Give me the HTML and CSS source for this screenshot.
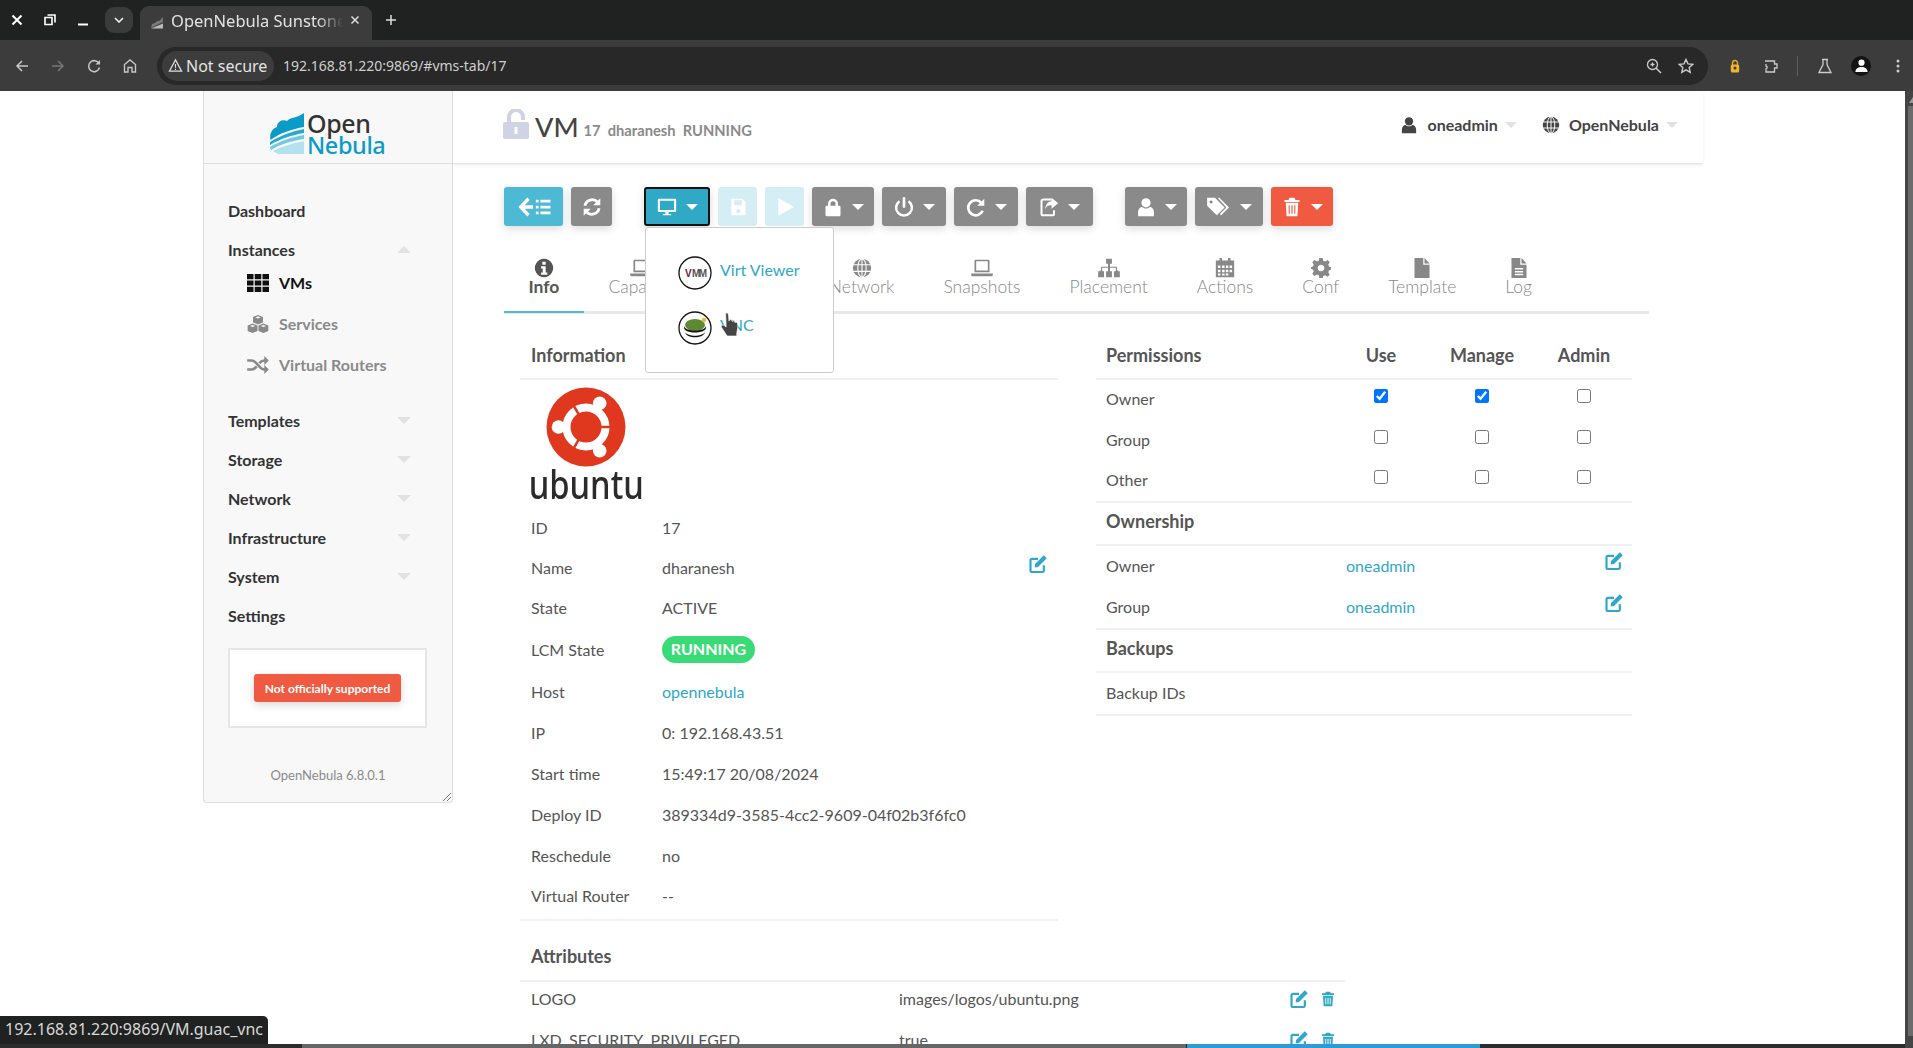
FILE: index.html
```html
<!DOCTYPE html>
<html lang="en">
<head>
<meta charset="utf-8">
<title>OpenNebula Sunstone</title>
<link rel="stylesheet" href="styles.css">
</head>
<body>
<svg class="sprite" xmlns="http://www.w3.org/2000/svg">
  <symbol id="i-edit" viewBox="0 0 24 24"><path d="M19 13.5V20a1.6 1.6 0 0 1-1.6 1.6H4.6A1.6 1.6 0 0 1 3 20V7.5a1.6 1.6 0 0 1 1.6-1.6H12" fill="none" stroke="currentColor" stroke-width="2.6"/><path d="M8.5 12 19 1.5 22.5 5 12 15.5l-4 .8z" fill="currentColor"/></symbol>
  <symbol id="i-trash" viewBox="0 0 24 24"><path fill="currentColor" fill-rule="evenodd" d="M9 1h6l1.2 2.5H21V6H3V3.500h4.800zM4.500 7h15l-1 16h-13zM8 10v10h1.300V10zM11.300 10v10h1.400V10zM14.700 10v10H16V10z"/></symbol>
  <symbol id="i-user" viewBox="0 0 24 24"><circle cx="12" cy="7" r="5.500" fill="currentColor"/><path d="M2.500 23v-5c0-3.500 2.500-6 5-6 1 1 2.500 1.800 4.500 1.800s3.500-.8 4.500-1.800c2.500 0 5 2.500 5 6v5z" fill="currentColor"/></symbol>
  <symbol id="i-globe" viewBox="0 0 24 24"><circle cx="12" cy="12" r="11" fill="currentColor"/><g fill="none" stroke="#fff" stroke-width="1.300"><ellipse cx="12" cy="12" rx="5" ry="11"/><path d="M12 1v22M1.500 8h21M1.500 16h21"/></g></symbol>
  <symbol id="i-desktop" viewBox="0 0 24 24"><path fill="currentColor" fill-rule="evenodd" d="M2.500 2h19A1.500 1.500 0 0 1 23 3.500v13a1.500 1.500 0 0 1-1.500 1.500h-19A1.500 1.500 0 0 1 1 16.500v-13A1.500 1.500 0 0 1 2.500 2zM3.500 4.500v11h17v-11zM10 18h4v2.500h3V22H7v-1.500h3z"/></symbol>
  <symbol id="i-save" viewBox="0 0 24 24"><path fill="currentColor" fill-rule="evenodd" d="M4 2h13l4 4v16H4zM7.500 4v6h9V4zM12.500 14.500a2.500 2.500 0 1 0 .01 0z"/></symbol>
  <symbol id="i-play" viewBox="0 0 24 24"><path fill="currentColor" d="M4 1.500 23 12 4 22.500z"/></symbol>
  <symbol id="i-lock" viewBox="0 0 24 24"><path fill="currentColor" fill-rule="evenodd" d="M6 10.500V8a6 6 0 0 1 12 0v2.500h1.500A1.500 1.500 0 0 1 21 12v9.500a1.500 1.500 0 0 1-1.500 1.500h-15A1.500 1.500 0 0 1 3 21.500V12a1.500 1.500 0 0 1 1.500-1.500zM9 10.500h6V8a3 3 0 0 0-6 0z"/></symbol>
  <symbol id="i-unlock" viewBox="0 0 26 30"><path d="M6 14V8a7 7 0 0 1 14 0v3" fill="none" stroke="currentColor" stroke-width="4"/><path fill="currentColor" fill-rule="evenodd" d="M2 13h22a2 2 0 0 1 2 2v13a2 2 0 0 1-2 2H2a2 2 0 0 1-2-2V15a2 2 0 0 1 2-2zM11.500 18v7h3v-7z"/></symbol>
  <symbol id="i-power" viewBox="0 0 24 24"><path d="M12 1.500v10" fill="none" stroke="currentColor" stroke-width="3.200" stroke-linecap="round"/><path d="M6.500 5A9.500 9.500 0 1 0 17.500 5" fill="none" stroke="currentColor" stroke-width="3"/></symbol>
  <symbol id="i-repeat" viewBox="0 0 24 24"><path d="M18.500 7A9 9 0 1 0 20 16.500" fill="none" stroke="currentColor" stroke-width="3.200"/><path d="M22 2v8.500h-8.500z" fill="currentColor"/></symbol>
  <symbol id="i-share" viewBox="0 0 24 24"><path d="M15 3H5a2 2 0 0 0-2 2v15a2 2 0 0 0 2 2h11a2 2 0 0 0 2-2v-4" fill="none" stroke="currentColor" stroke-width="2.400"/><path d="M15 1l8 6.500-8 6.500v-4c-4 0-6 1-7.500 5 0-6 3-9.500 7.500-10z" fill="currentColor"/></symbol>
  <symbol id="i-tags" viewBox="0 0 28 24"><path fill="currentColor" fill-rule="evenodd" d="M1 2h9l11 11-9 9L1 11zM5.500 5a1.800 1.800 0 1 0 .01 0z"/><path d="M13 2h2l11 11-9 9-1.500-1.500L23 13z" fill="currentColor"/></symbol>
  <symbol id="i-refresh" viewBox="0 0 24 24"><path d="M3.500 10.500A8.800 8.800 0 0 1 18.500 6" fill="none" stroke="currentColor" stroke-width="3.400"/><path d="M22 1.500V10h-8.500z" fill="currentColor"/><path d="M20.500 13.500A8.800 8.800 0 0 1 5.500 18" fill="none" stroke="currentColor" stroke-width="3.400"/><path d="M2 22.500V14h8.500z" fill="currentColor"/></symbol>
  <symbol id="i-back" viewBox="0 0 36 24"><path d="M12 3 3.500 12l8.500 9M4 12h13" fill="none" stroke="currentColor" stroke-width="3.600"/><path fill="currentColor" d="M20 4h3v3h-3zM25 4h11v3H25zM20 10.500h3v3h-3zM25 10.500h11v3H25zM20 17h3v3h-3zM25 17h11v3H25z"/></symbol>
  <symbol id="i-info" viewBox="0 0 24 24"><path fill="currentColor" fill-rule="evenodd" d="M12 1a11 11 0 1 0 .01 0zM10 4.500h4v3.500h-4zM8.500 10h5.500v7.500h2V20H8.500v-2.500h2V12.500h-2z"/></symbol>
  <symbol id="i-laptop" viewBox="0 0 26 24"><path fill="currentColor" fill-rule="evenodd" d="M5.500 2h15A1.500 1.500 0 0 1 22 3.500V17H4V3.500A1.500 1.500 0 0 1 5.500 2zM6 4v11h14V4zM0 18.500h26V20a2 2 0 0 1-2 2H2a2 2 0 0 1-2-2z"/></symbol>
  <symbol id="i-sitemap" viewBox="0 0 26 24"><path fill="currentColor" d="M9.500 1h7v6h-2.300v3.500h8.300V15H24v1h-2.800v-4.300h-7V16h-2.400v-4.300h-7V16H2v-1h1.500v-4.500h8.300V7H9.500zM0 16h7v7H0zM9.500 16h7v7h-7zM19 16h7v7h-7z"/></symbol>
  <symbol id="i-calendar" viewBox="0 0 24 24"><path fill="currentColor" fill-rule="evenodd" d="M5.500 0h3v3h7V0h3v3H23v20H1V3h4.500zM3.500 9v3h3V9zM8.500 9v3h3V9zM13 9v3h3V9zM17.500 9v3h3V9zM3.500 14v3h3v-3zM8.500 14v3h3v-3zM13 14v3h3v-3zM17.500 14v3h3v-3zM3.500 18.500v2.500h3v-2.500zM8.500 18.500v2.500h3v-2.500zM13 18.500v2.500h3v-2.500z"/></symbol>
  <symbol id="i-gear" viewBox="0 0 24 24"><path fill="currentColor" fill-rule="evenodd" d="M10 0h4l.7 3.300 2.400 1 2.900-1.800L22.500 5l-1.800 2.900 1 2.400L24 11v3l-2.300.7-1 2.400 1.800 2.900-2.500 2.500-2.900-1.800-2.400 1L14 24h-4l-.7-3.300-2.400-1L4 21.500 1.500 19l1.800-2.900-1-2.400L0 13v-2l2.300-.7 1-2.400L1.500 5 4 2.500l2.900 1.800 2.400-1zM12 8a4 4 0 1 0 .01 0z"/></symbol>
  <symbol id="i-file" viewBox="0 0 20 24"><path fill="currentColor" d="M1 0h10.500v8H19v16H1zM13 0l6 6.500h-6z"/></symbol>
  <symbol id="i-filetext" viewBox="0 0 20 24"><path fill="currentColor" fill-rule="evenodd" d="M1 0h10.500v8H19v16H1zM5 12v1.800h10V12zM5 15.500v1.800h10v-1.800zM5 19v1.800h10V19z"/><path fill="currentColor" d="M13 0l6 6.500h-6z"/></symbol>
  <symbol id="i-th" viewBox="0 0 22 18"><path fill="currentColor" d="M0 0h6.500v5.200H0zM7.700 0h6.600v5.200H7.700zM15.500 0H22v5.200h-6.500zM0 6.400h6.500v5.200H0zM7.700 6.400h6.600v5.200H7.700zM15.500 6.400H22v5.200h-6.500zM0 12.800h6.500V18H0zM7.700 12.800h6.600V18H7.700zM15.500 12.800H22V18h-6.500z"/></symbol>
  <symbol id="i-cubes" viewBox="0 0 24 20"><path fill="currentColor" fill-rule="evenodd" d="M12 0l5.500 2.200v6l-5.500 2.300-5.500-2.300v-6zM9 2.700l3 1.200 3-1.200-3-1.200zM6 9.500l5.500 2.200v6L6 20 .5 17.700v-6zM3 12.200l3 1.200 3-1.200-3-1.200zM18 9.500l5.500 2.200v6L18 20l-5.500-2.300v-6zM15 12.200l3 1.200 3-1.200-3-1.200z"/></symbol>
  <symbol id="i-random" viewBox="0 0 24 20"><path d="M0 5h5c6 0 8 10 14 10h1M0 15h5c2.500 0 4-1.700 5.500-3.500M13.500 8C15 6.300 16.500 5 19 5h1" fill="none" stroke="currentColor" stroke-width="3"/><path fill="currentColor" d="M19 0l5 5-5 5zM19 10l5 5-5 5z"/></symbol>
</svg>

<header class="tabstrip">
  <div class="winctl">
    <svg class="win-ico" viewBox="0 0 12 12"><path d="M1.500 1.500l9 9M10.500 1.500l-9 9" stroke="#fff" stroke-width="2" fill="none"/></svg>
    <svg class="win-ico" viewBox="0 0 12 12"><path d="M3.500 1h7.500v7.500M1 3.500h7v7H1z" stroke="#fff" stroke-width="1.600" fill="none"/></svg>
    <svg class="win-ico" viewBox="0 0 12 12"><path d="M1 10.500h10" stroke="#fff" stroke-width="2" fill="none"/></svg>
  </div>
  <div class="tab-search"><svg class="tab-chev" viewBox="0 0 10 6"><path d="M1 1l4 4 4-4" stroke="#eee" stroke-width="1.600" fill="none"/></svg></div>
  <div class="browser-tab">
    <svg class="favicon" viewBox="0 0 14 14"><path d="M13 1v5L1 12l1-4c3 0 4-3 6-3s3-2 5-4z" fill="#777"/><path d="M1 12.500l12-5v5z" fill="#bbb"/></svg>
    <span class="browser-tab-title">OpenNebula Sunstone</span>
    <svg class="tab-close" viewBox="0 0 10 10"><path d="M1.500 1.500l7 7M8.500 1.500l-7 7" stroke="#ddd" stroke-width="1.500" fill="none"/></svg>
  </div>
  <svg class="tab-new" viewBox="0 0 12 12"><path d="M6 1v10M1 6h10" stroke="#ddd" stroke-width="1.500" fill="none"/></svg>
</header>

<div class="toolbar">
  <span class="tb-btn"><svg class="tb-ico" viewBox="0 0 16 16"><path d="M14 8H3M8 3 3 8l5 5" stroke="#c7c7c7" stroke-width="1.500" fill="none"/></svg></span>
  <span class="tb-btn"><svg class="tb-ico" viewBox="0 0 16 16"><path d="M2 8h11M8 3l5 5-5 5" stroke="#777" stroke-width="1.500" fill="none"/></svg></span>
  <span class="tb-btn"><svg class="tb-ico" viewBox="0 0 16 16"><path d="M13 5.500A5.500 5.500 0 1 0 13.500 9.500" stroke="#c7c7c7" stroke-width="1.500" fill="none"/><path d="M14 2v4.500H9.500z" fill="#c7c7c7"/></svg></span>
  <span class="tb-btn"><svg class="tb-ico" viewBox="0 0 16 16"><path d="M2.500 14V6.500L8 2l5.500 4.500V14H10V9.500H6V14z" stroke="#c7c7c7" stroke-width="1.400" fill="none"/></svg></span>
  <div class="omnibox">
    <div class="secure-pill">
      <svg class="warn-ico" viewBox="0 0 16 16"><path d="M8 2 1.500 14h13z" stroke="#ddd" stroke-width="1.300" fill="none"/><path d="M8 6.500v4M8 11.500v1.300" stroke="#ddd" stroke-width="1.200"/></svg>
      <span>Not secure</span>
    </div>
    <span class="url">192.168.81.220:9869/#vms-tab/17</span>
    <div class="omni-right">
      <svg class="tb-ico" viewBox="0 0 16 16"><circle cx="6.500" cy="6.500" r="5" stroke="#ccc" stroke-width="1.300" fill="none"/><path d="M10 10l5 5" stroke="#ccc" stroke-width="1.500"/><path d="M4.500 6.500h4M6.500 4.500v4" stroke="#ccc" stroke-width="1.300"/></svg>
      <svg class="tb-ico" viewBox="0 0 16 16"><path d="M8 1.500l2 4.400 4.700.5-3.500 3.200 1 4.700L8 11.900l-4.200 2.400 1-4.700L1.300 6.400 6 5.900z" stroke="#ccc" stroke-width="1.400" fill="none"/></svg>
    </div>
  </div>
  <span class="tb-btn"><svg class="tb-ico" viewBox="0 0 16 16"><path d="M5.500 7V5a2.500 2.500 0 0 1 5 0v2" stroke="#e5a823" stroke-width="1.500" fill="none"/><rect x="3.800" y="6.500" width="8.400" height="8" rx="1.500" fill="#f0b429"/><circle cx="8" cy="10" r="1.500" fill="#3a3a3a"/></svg></span>
  <span class="tb-btn"><svg class="tb-ico" viewBox="0 0 16 16"><path d="M2 3h9.500v3H14v4h-2.500v4H3v-3c1.500 0 1.500-3 0-3V6" stroke="#ccc" stroke-width="1.300" fill="none"/></svg></span>
  <span class="tb-sep"></span>
  <span class="tb-btn"><svg class="tb-ico" viewBox="0 0 16 16"><path d="M5 1.500h6M6 1.500v5L2 14.500h12L10 6.500v-5" stroke="#ccc" stroke-width="1.300" fill="none"/></svg></span>
  <span class="tb-btn"><span class="avatar"><svg class="avatar-ico" viewBox="0 0 16 16"><circle cx="8" cy="5" r="3.300" fill="#fff"/><path d="M1.500 15c0-4 3-5.500 6.500-5.500s6.500 1.500 6.500 5.500z" fill="#fff"/></svg></span></span>
  <span class="tb-btn tb-btn-last"><svg class="tb-ico" viewBox="0 0 16 16"><circle cx="8" cy="3" r="1.500" fill="#ccc"/><circle cx="8" cy="8" r="1.500" fill="#ccc"/><circle cx="8" cy="13" r="1.500" fill="#ccc"/></svg></span>
</div>

<div class="window">
  <div class="viewport">
    <div class="canvas">
      <div class="app">
        <aside class="sidebar">
          <div class="brand">
            <svg class="brand-mark" viewBox="0 0 34 41"><path d="M34 0v14C22 16 10 20 .5 27-1 20 3 15 7 14 7 8 13 6 17 8 20 4 28 5 34 0z" fill="#0a9cc7"/><path d="M0 29c10-6 22-11 34-13v4C22 22 10 26 0 32z" fill="#2aa9d0"/><path d="M0 34c10-6 22-10 34-12v4C22 28 10 31 1 37z" fill="#74c8e2"/><path d="M3 38c10-5 20-8 31-10v13H8z" fill="#b4e1ef"/></svg>
            <div class="brand-name"><span class="brand-open">Open</span><span class="brand-nebula">Nebula</span></div>
          </div>
          <nav class="nav">
            <div class="nav-item">Dashboard</div>
            <div class="nav-item">Instances<i class="caret-up"></i></div>
            <div class="subnav">
              <div class="sub-item sub-active"><svg class="sub-ico"><use href="#i-th"/></svg>VMs</div>
              <div class="sub-item"><svg class="sub-ico"><use href="#i-cubes"/></svg>Services</div>
              <div class="sub-item"><svg class="sub-ico"><use href="#i-random"/></svg>Virtual Routers</div>
            </div>
            <div class="nav-item">Templates<i class="caret-down"></i></div>
            <div class="nav-item">Storage<i class="caret-down"></i></div>
            <div class="nav-item">Network<i class="caret-down"></i></div>
            <div class="nav-item">Infrastructure<i class="caret-down"></i></div>
            <div class="nav-item">System<i class="caret-down"></i></div>
            <div class="nav-item">Settings</div>
          </nav>
          <div class="support-box"><span class="support-btn">Not officially supported</span></div>
          <div class="version">OpenNebula 6.8.0.1</div>
          <svg class="resize" viewBox="0 0 8 8"><path d="M0 8l8-8M4 8l4-4" stroke="#777" stroke-width="1" fill="none"/></svg>
        </aside>

        <main class="main">
          <div class="topbar">
            <svg class="title-lock"><use href="#i-unlock"/></svg>
            <span class="title">VM</span>
            <span class="subtitle">17&nbsp; dharanesh&nbsp; RUNNING</span>
            <div class="account">
              <svg class="acc-ico"><use href="#i-user"/></svg><span class="acc-name">oneadmin</span><i class="caret-down acc-caret"></i>
              <svg class="acc-ico acc-globe"><use href="#i-globe"/></svg><span class="acc-name">OpenNebula</span><i class="caret-down acc-caret"></i>
            </div>
          </div>

          <div class="content">
            <div class="actions">
              <button class="btn btn-back"><svg class="ico-back"><use href="#i-back"/></svg></button>
              <button class="btn btn-grey btn-refresh"><svg class="ico"><use href="#i-refresh"/></svg></button>
              <button class="btn btn-vnc group-start"><svg class="ico"><use href="#i-desktop"/></svg><i class="btn-caret"></i></button>
              <button class="btn btn-pale"><svg class="ico"><use href="#i-save"/></svg></button>
              <button class="btn btn-pale"><svg class="ico"><use href="#i-play"/></svg></button>
              <button class="btn btn-grey"><svg class="ico"><use href="#i-lock"/></svg><i class="btn-caret"></i></button>
              <button class="btn btn-grey btn-m"><svg class="ico"><use href="#i-power"/></svg><i class="btn-caret"></i></button>
              <button class="btn btn-grey btn-m"><svg class="ico"><use href="#i-repeat"/></svg><i class="btn-caret"></i></button>
              <button class="btn btn-grey btn-l"><svg class="ico"><use href="#i-share"/></svg><i class="btn-caret"></i></button>
              <button class="btn btn-grey group-start"><svg class="ico"><use href="#i-user"/></svg><i class="btn-caret"></i></button>
              <button class="btn btn-grey btn-xl"><svg class="ico ico-wide"><use href="#i-tags"/></svg><i class="btn-caret"></i></button>
              <button class="btn btn-red"><svg class="ico"><use href="#i-trash"/></svg><i class="btn-caret"></i></button>
              <div class="menu">
                <div class="menu-item">
                  <svg class="menu-logo" viewBox="0 0 34 34"><circle cx="17" cy="17" r="16" fill="#fff" stroke="#111" stroke-width="1.300"/><text class="vm-v" x="7" y="21">V</text><text class="vm-m" x="14" y="21">MM</text></svg>
                  <span>Virt Viewer</span>
                </div>
                <div class="menu-item">
                  <svg class="menu-logo" viewBox="0 0 34 34"><circle cx="17" cy="17" r="16" fill="#fff" stroke="#111" stroke-width="1.300"/><ellipse cx="17" cy="14" rx="10" ry="6" fill="#5d8a2e"/><circle cx="26" cy="9" r="2.300" fill="#e3bd4a"/><path d="M6 15c1 6 21 6 22 0v2c-1 6-21 6-22 0zM7 21c3 5 17 5 20 0-1 7-19 7-20 0z" fill="#111"/></svg>
                  <span>VNC</span>
                </div>
              </div>
              <svg class="hand" viewBox="0 0 20 26"><path d="M5.500 1.500c1.200-1 2.600-.5 2.800 1l.7 7 .4-1c1-1 2.200-.7 2.600.3l.3 1c.9-.8 2.200-.6 2.600.4l.2.8c1-.6 2.400-.2 2.700 1 .5 2.500.2 6-.6 8.500L17 25H7l-5.800-9c-.7-1.300.5-3 2.200-2.200L6 15.500z" fill="#444" stroke="#fff" stroke-width=".7"/></svg>
            </div>

            <div class="tabs">
              <div class="vm-tab vm-tab-active"><svg class="tab-ico"><use href="#i-info"/></svg>Info</div>
              <div class="vm-tab"><svg class="tab-ico"><use href="#i-laptop"/></svg>Capacity</div>
              <div class="vm-tab vm-tab-covered"><svg class="tab-ico"><use href="#i-laptop"/></svg>Storage</div>
              <div class="vm-tab"><svg class="tab-ico"><use href="#i-globe"/></svg>Network</div>
              <div class="vm-tab"><svg class="tab-ico"><use href="#i-laptop"/></svg>Snapshots</div>
              <div class="vm-tab"><svg class="tab-ico"><use href="#i-sitemap"/></svg>Placement</div>
              <div class="vm-tab"><svg class="tab-ico"><use href="#i-calendar"/></svg>Actions</div>
              <div class="vm-tab"><svg class="tab-ico"><use href="#i-gear"/></svg>Conf</div>
              <div class="vm-tab"><svg class="tab-ico"><use href="#i-file"/></svg>Template</div>
              <div class="vm-tab"><svg class="tab-ico"><use href="#i-filetext"/></svg>Log</div>
            </div>

            <div class="panels">
              <section class="info">
                <div class="head">Information</div>
                <div class="os-logo">
                  <svg class="ubuntu-mark" viewBox="0 0 80 80">
                    <circle cx="40" cy="40" r="39.500" fill="#e0381e"/>
                    <circle cx="40" cy="40" r="19.500" fill="none" stroke="#fff" stroke-width="8"/>
                    <path d="M52 40h14M34 29.600 27 17.500M34 50.400 27 62.500" stroke="#e0381e" stroke-width="2.500"/>
                    <circle cx="12.500" cy="40" r="6.800" fill="#fff"/>
                    <circle cx="53.700" cy="16.200" r="6.800" fill="#fff"/>
                    <circle cx="53.700" cy="63.800" r="6.800" fill="#fff"/>
                  </svg>
                  <span class="ubuntu-word">ubuntu</span>
                </div>
                <div class="row row-short"><span>ID</span><span>17</span></div>
                <div class="row row-short"><span>Name</span><span>dharanesh</span><svg class="edit edit-end"><use href="#i-edit"/></svg></div>
                <div class="row"><span>State</span><span>ACTIVE</span></div>
                <div class="row row-tall"><span>LCM State</span><span class="badge">RUNNING</span></div>
                <div class="row row-tall"><span>Host</span><a class="link">opennebula</a></div>
                <div class="row"><span>IP</span><span>0: 192.168.43.51</span></div>
                <div class="row"><span>Start time</span><span>15:49:17 20/08/2024</span></div>
                <div class="row"><span>Deploy ID</span><span>389334d9-3585-4cc2-9609-04f02b3f6fc0</span></div>
                <div class="row row-short"><span>Reschedule</span><span>no</span></div>
                <div class="row"><span>Virtual Router</span><span>--</span></div>
              </section>

              <section class="side">
                <div class="perm-grid perm-head">
                  <span>Permissions</span><span class="center">Use</span><span class="center">Manage</span><span class="center">Admin</span>
                </div>
                <div class="perm-grid perm-row"><span>Owner</span><span class="center"><input class="check" type="checkbox" checked></span><span class="center"><input class="check" type="checkbox" checked></span><span class="center"><input class="check" type="checkbox"></span></div>
                <div class="perm-grid perm-row"><span>Group</span><span class="center"><input class="check" type="checkbox"></span><span class="center"><input class="check" type="checkbox"></span><span class="center"><input class="check" type="checkbox"></span></div>
                <div class="perm-grid perm-row perm-end"><span>Other</span><span class="center"><input class="check" type="checkbox"></span><span class="center"><input class="check" type="checkbox"></span><span class="center"><input class="check" type="checkbox"></span></div>
                <div class="head">Ownership</div>
                <div class="own-row"><span>Owner</span><a class="link">oneadmin</a><svg class="edit edit-up"><use href="#i-edit"/></svg></div>
                <div class="own-row own-end"><span>Group</span><a class="link">oneadmin</a><svg class="edit edit-up"><use href="#i-edit"/></svg></div>
                <div class="head">Backups</div>
                <div class="own-row own-end"><span>Backup IDs</span></div>
              </section>

              <section class="attrs">
                <div class="head">Attributes</div>
                <div class="attr-row"><span>LOGO</span><span>images/logos/ubuntu.png</span><span class="attr-acts"><svg class="edit"><use href="#i-edit"/></svg><svg class="edit trash"><use href="#i-trash"/></svg></span></div>
                <div class="attr-row"><span>LXD_SECURITY_PRIVILEGED</span><span>true</span><span class="attr-acts"><svg class="edit"><use href="#i-edit"/></svg><svg class="edit trash"><use href="#i-trash"/></svg></span></div>
              </section>
            </div>
          </div>
        </main>
      </div>
    </div>
    <div class="hscroll"><i class="hs-dark"></i><i class="hs-grey"></i><i class="hs-blue"></i></div>
  </div>
  <div class="vscroll"><i class="vs-arrow"></i><i class="vs-thumb"></i></div>
  <div class="status">192.168.81.220:9869/VM.guac_vnc</div>
</div>
</body>
</html>
```

FILE: styles.css
```css
* { box-sizing: border-box; }
html, body { margin: 0; height: 100%; }
body {
  width: 1913px;
  height: 1048px;
  overflow: hidden;
  display: flex;
  flex-direction: column;
  background: #fff;
  font-family: Lato, "Liberation Sans", sans-serif;
  font-size: 16px;
  color: #555;
}
.sprite { display: none; }

/* Browser chrome */
.tabstrip {
  height: 40px;
  flex: none;
  display: flex;
  align-items: flex-end;
  background: #202221;
  font-family: "Noto Sans", sans-serif;
}
.winctl { display: flex; align-self: center; margin-left: 11px; gap: 21px; }
.win-ico { width: 12px; height: 12px; display: block; }
.tab-search {
  width: 28px;
  height: 26px;
  margin: 0 0 7px 16px;
  border-radius: 9px;
  background: #3a3b3b;
  display: flex;
  align-items: center;
  justify-content: center;
}
.tab-chev { width: 10px; height: 6px; }
.browser-tab {
  width: 232px;
  height: 34px;
  margin-left: 7px;
  padding: 0 10px 6px;
  border-radius: 9px 9px 0 0;
  background: #3c3c3c;
  display: flex;
  align-items: center;
  color: #e3e3e3;
}
.favicon { width: 14px; height: 14px; flex: none; margin-top: 5px; }
.browser-tab-title {
  width: 172px;
  margin-left: 7px;
  font-size: 16.5px;
  white-space: nowrap;
  overflow: hidden;
  -webkit-mask-image: linear-gradient(to right, #000 85%, transparent 100%);
  mask-image: linear-gradient(to right, #000 85%, transparent 100%);
}
.tab-close { width: 10px; height: 10px; margin-left: 7px; }
.tab-new { width: 12px; height: 12px; margin: 0 0 14px 13px; }

.toolbar {
  height: 51px;
  flex: none;
  display: flex;
  align-items: center;
  padding-left: 4px;
  background: #3c3c3c;
  font-family: "Noto Sans", sans-serif;
}
.tb-btn { width: 36px; height: 36px; flex: none; display: flex; align-items: center; justify-content: center; }
.tb-btn-last { width: 34px; padding-left: 3px; }
.tb-ico { width: 16px; height: 16px; display: block; flex: none; }
.tb-sep { width: 1px; height: 20px; margin: 0 9px 0 8px; background: #5e5e5e; flex: none; }
.avatar { width: 20px; height: 20px; border-radius: 50%; background: #141414; display: flex; align-items: center; justify-content: center; overflow: hidden; }
.avatar-ico { width: 15px; height: 15px; }
.omnibox {
  width: 1551px;
  height: 38px;
  margin: 0 9px 0 9px;
  flex: none;
  border-radius: 19px;
  background: #282828;
  display: flex;
  align-items: center;
  padding-left: 5px;
}
.secure-pill {
  height: 30px;
  width: 112px;
  padding-left: 6px;
  border-radius: 15px;
  background: #3c3c3c;
  display: flex;
  align-items: center;
  gap: 3px;
  font-size: 16px;
  color: #e3e3e3;
  white-space: nowrap;
}
.warn-ico { width: 15px; height: 15px; flex: none; }
.url { margin-left: 9px; font-size: 14px; color: #cfcfcf; }
.omni-right { margin-left: auto; display: flex; gap: 16px; padding-right: 14px; }

/* Window */
.window { flex: 1; min-height: 0; display: flex; position: relative; }
.viewport { flex: 1; min-width: 0; display: flex; flex-direction: column; }
.canvas { flex: 1; min-height: 0; overflow: hidden; padding-left: 203px; }
.vscroll { width: 8px; flex: none; background: #444; display: flex; flex-direction: column; align-items: flex-end; }
.vs-arrow { width: 0; height: 0; margin: 6px 0 0; border-left: 4px solid transparent; border-bottom: 6px solid #999; }
.vs-thumb { width: 5px; flex: 1; margin-top: 3px; margin-bottom: 12px; background: #6b6b6b; }
.hscroll { height: 4px; flex: none; display: flex; background: #2c2c2c; }
.hscroll i { display: block; height: 4px; }
.hs-dark { width: 302px; background: #2c2c2c; }
.hs-grey { width: 884px; background: #666; }
.hs-blue { width: 294px; background: #2f9bd6; border-left: 1px solid #222; }
.status {
  position: absolute;
  left: 0;
  bottom: 4px;
  width: 268px;
  height: 28px;
  padding-left: 5px;
  border-radius: 0 5px 0 0;
  background: #202221;
  color: #d8d8d8;
  font-family: "Noto Sans", sans-serif;
  font-size: 16px;
  line-height: 27px;
  white-space: nowrap;
}

/* App */
.app { width: 1500px; display: flex; align-items: flex-start; }
.sidebar {
  width: 250px;
  height: 712px;
  flex: none;
  position: relative;
  background: #f8f8f8;
  border: 1px solid #dcdcdc;
  border-top: 0;
  border-radius: 0 0 4px 4px;
}
.brand {
  height: 73px;
  border-bottom: 1px solid #dedede;
  display: flex;
  align-items: center;
  padding: 13px 0 0 66px;
  gap: 3px;
}
.brand-mark { width: 34px; height: 41px; flex: none; }
.brand-name { display: flex; flex-direction: column; font-family: "Noto Sans", sans-serif; font-weight: 500; font-size: 25px; line-height: 22px; letter-spacing: -.4px; }
.brand-open { color: #333; }
.brand-nebula { color: #0a9cc7; font-size: 23.5px; }
.nav { padding: 27px 24px 0 24px; }
.nav-item {
  height: 39px;
  display: flex;
  align-items: center;
  justify-content: space-between;
  padding-right: 17px;
  font-size: 16px;
  font-weight: 700;
  color: #333;
}
.caret-down, .caret-up, .btn-caret { display: block; width: 0; height: 0; flex: none; }
.caret-down { border-left: 7px solid transparent; border-right: 7px solid transparent; border-top: 7px solid #e2e2e2; }
.caret-up { border-left: 7px solid transparent; border-right: 7px solid transparent; border-bottom: 7px solid #e2e2e2; }
.subnav { margin: -7px 0 16px 19px; }
.sub-item {
  height: 41px;
  display: flex;
  align-items: center;
  gap: 10px;
  font-size: 16px;
  font-weight: 700;
  color: #8a8a8a;
}
.sub-active { color: #111; }
.sub-ico { width: 22px; height: 18px; flex: none; }
.support-box {
  width: 199px;
  height: 80px;
  margin: 13px 0 0 24px;
  background: #fff;
  border: 2px solid #e6e6e6;
  display: flex;
  align-items: center;
  justify-content: center;
}
.support-btn {
  height: 28px;
  width: 147px;
  border-radius: 3px;
  background: #f05a40;
  box-shadow: 0 3px 8px rgba(0,0,0,.15);
  color: #fff;
  font-size: 12px;
  font-weight: 700;
  display: flex;
  align-items: center;
  justify-content: center;
  white-space: nowrap;
}
.version { margin-top: 39px; text-align: center; font-size: 13px; color: #8a8a8a; }
.resize { position: absolute; right: 1px; bottom: 1px; width: 8px; height: 8px; }

.main { width: 1250px; flex: none; }
.topbar {
  height: 73px;
  padding: 0 25px 2px 50px;
  border-bottom: 1px solid #e6e6e6;
  box-shadow: 0 1px 3px rgba(0,0,0,.08);
  display: flex;
  align-items: center;
}
.title-lock { width: 26px; height: 30px; color: #cfd3e3; flex: none; margin-top: -4px; }
.title { margin-left: 6px; font-size: 27px; font-weight: 500; color: #444; }
.subtitle { margin: 8px 0 0 5px; font-size: 14.7px; font-weight: 700; color: #8a8a8a; white-space: nowrap; }
.account { margin-left: auto; display: flex; align-items: center; color: #444; margin-top: -3px; }
.acc-ico { width: 18px; height: 18px; color: #444; flex: none; }
.acc-globe { margin-left: 25px; }
.acc-name { margin-left: 9px; font-size: 16px; font-weight: 700; }
.acc-caret { margin-left: 7px; border-left-width: 6px; border-right-width: 6px; border-top-width: 6px; }

.content { padding: 23px 0 0 51px; }
.actions { display: flex; gap: 8px; position: relative; }
.btn {
  height: 39px;
  width: 62px;
  padding: 0;
  border: 0;
  border-radius: 3px;
  color: #fff;
  display: flex;
  align-items: center;
  justify-content: center;
  gap: 9px;
  box-shadow: 0 3px 9px rgba(0,0,0,.14);
}
.btn-m { width: 64px; }
.btn-l { width: 67px; }
.btn-xl { width: 68px; }
.ico { width: 20px; height: 20px; flex: none; }
.ico-wide { width: 25px; height: 21px; }
.ico-back { width: 36px; height: 22px; }
.btn-caret { border-left: 6px solid transparent; border-right: 6px solid transparent; border-top: 6px solid #fff; }
.btn-back { width: 59px; background: #4db9d4; }
.btn-refresh { width: 41px; }
.btn-grey { background: #8a8a8a; }
.btn-vnc { width: 66px; background: #2fa9c5; border: 2px solid #111; }
.btn-pale { width: 39px; background: #d5edf4; box-shadow: none; }
.btn-red { background: #f05a40; }
.group-start { margin-left: 24px; }
.menu {
  position: absolute;
  left: 141px;
  top: 40px;
  width: 189px;
  height: 146px;
  background: #fff;
  border: 1px solid #ccc;
  border-radius: 3px;
  padding: 28px 0 0 32px;
  z-index: 5;
}
.menu-item { height: 55px; display: flex; align-items: flex-start; gap: 8px; color: #2fa7c9; font-size: 16px; }
.menu-item span { line-height: 28px; }
.menu-logo { width: 34px; height: 34px; flex: none; }
.vm-v, .vm-m { font-family: "Liberation Sans", sans-serif; font-weight: 700; font-size: 10px; letter-spacing: -1.500px; }
.vm-v { fill: #6d1a36; }
.vm-m { fill: #555; }
.hand { position: absolute; left: 216px; top: 125px; width: 20px; height: 25px; z-index: 6; }

.tabs {
  width: 1145px;
  height: 58px;
  margin-top: 30px;
  display: flex;
  border-bottom: 3px solid #e8e8e8;
}
.vm-tab {
  height: 57px;
  padding: 2px 24.5px 0;
  display: flex;
  flex-direction: column;
  align-items: center;
  font-size: 17.5px;
  font-weight: 300;
  line-height: 20px;
  color: #888;
  white-space: nowrap;
}
.vm-tab-active { font-weight: 700; color: #555; border-bottom: 2px solid #4db9d4; }
.vm-tab-covered { visibility: hidden; }
.tab-ico { width: 22px; height: 20px; flex: none; color: #888; margin-bottom: -1px; }
.vm-tab-active .tab-ico { color: #555; }

.panels {
  display: grid;
  grid-template-columns: 538px 536px;
  column-gap: 38px;
  row-gap: 17px;
  margin: 23px 0 0 16px;
}
.head {
  height: 43px;
  padding-left: 10px;
  font-size: 18px;
  font-weight: 700;
  line-height: 37px;
  color: #555;
  border-bottom: 2px solid #f1f1f1;
}
.info { padding-bottom: 3px; border-bottom: 2px solid #f1f1f1; }
.info .head { padding-left: 11px; }
.os-logo { height: 127px; padding: 7px 0 0 10px; width: 122px; display: flex; flex-direction: column; align-items: center; }
.ubuntu-mark { width: 80px; height: 80px; flex: none; }
.ubuntu-word { font-family: "Noto Sans", sans-serif; font-size: 40px; font-weight: 500; line-height: 34px; color: #2b2b2b; transform: scaleX(.82); }
.row {
  height: 41px;
  padding: 0 10px 0 11px;
  display: grid;
  grid-template-columns: 131px 1fr auto;
  align-items: center;
  white-space: nowrap;
}
.row-short { height: 40px; }
.row-tall { height: 42px; }
.link { color: #2fa7c9; }
.badge {
  justify-self: start;
  height: 27px;
  width: 93px;
  border-radius: 14px;
  background: #3adb76;
  color: #fff;
  font-size: 16px;
  font-weight: 700;
  line-height: 26px;
  text-align: center;
}
.edit { width: 20px; height: 20px; color: #2fa7c9; flex: none; display: block; }
.trash { width: 16px; height: 18px; }
.edit-end { margin-top: -6px; }
.edit-up { justify-self: end; margin-top: -8px; }

.perm-grid { display: grid; grid-template-columns: 238px 94px 108px 96px; align-items: center; }
.perm-grid > span:first-child { padding-left: 10px; }
.center { text-align: center; }
.perm-head { height: 43px; font-size: 18px; font-weight: 700; line-height: 37px; align-items: start; border-bottom: 2px solid #f1f1f1; }
.perm-row { height: 41px; padding-bottom: 5px; }
.perm-end { border-bottom: 2px solid #f1f1f1; }
.check { margin: 0 0 6px; width: 14px; height: 14px; vertical-align: middle; }
.own-row {
  height: 41px;
  padding: 0 8px 3px 10px;
  display: grid;
  grid-template-columns: 240px 1fr auto;
  align-items: center;
}
.own-end { height: 43px; padding-bottom: 2px; border-bottom: 2px solid #f1f1f1; }
.attrs { grid-column: 1 / -1; width: 825px; }
.attrs .head { height: 44px; padding-left: 11px; }
.attr-row {
  height: 41px;
  padding: 0 9px 8px 11px;
  display: grid;
  grid-template-columns: 368px 1fr auto;
  align-items: center;
}
.attr-acts { display: flex; gap: 11px; align-items: center; }
```
